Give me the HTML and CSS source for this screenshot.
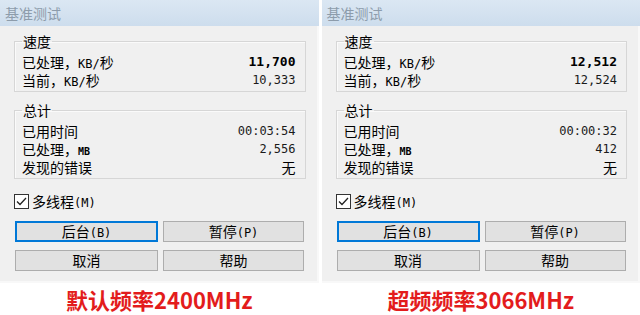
FILE: index.html
```html
<!DOCTYPE html>
<html lang="zh-CN">
<head>
<meta charset="utf-8">
<title>基准测试</title>
<link rel="stylesheet" href="styles.css">
</head>
<body>
<div class="screens">
  <div class="shot">
    <div class="window">
      <div class="titlebar">基准测试</div>
      <div class="content">
        <fieldset class="group">
          <legend>速度</legend>
          <div class="row"><span class="label">已处理，<span class="asc">KB/</span>秒</span><span class="num bold">11,700</span></div>
          <div class="row"><span class="label">当前，<span class="asc">KB/</span>秒</span><span class="num">10,333</span></div>
        </fieldset>
        <fieldset class="group">
          <legend>总计</legend>
          <div class="row"><span class="label">已用时间</span><span class="num">00:03:54</span></div>
          <div class="row"><span class="label">已处理，<span class="asc small">MB</span></span><span class="num">2,556</span></div>
          <div class="row"><span class="label">发现的错误</span><span class="label">无</span></div>
        </fieldset>
        <div class="check">
          <svg class="box" width="15" height="15" viewBox="0 0 15 15"><rect x="0.5" y="0.5" width="14" height="14" fill="#fff" stroke="#333"/><path d="M3 7.5 L6 10.5 L12 4" fill="none" stroke="#222" stroke-width="1.3"/></svg>
          <span class="label">多线程<span class="asc">(M)</span></span>
        </div>
        <div class="buttons">
          <div class="btn focus">后台<span class="asc">(B)</span></div>
          <div class="btn">暂停<span class="asc">(P)</span></div>
          <div class="btn">取消</div>
          <div class="btn">帮助</div>
        </div>
      </div>
    </div>
    <div class="caption">默认频率2400MHz</div>
  </div>
  <div class="shot">
    <div class="window">
      <div class="titlebar">基准测试</div>
      <div class="content">
        <fieldset class="group">
          <legend>速度</legend>
          <div class="row"><span class="label">已处理，<span class="asc">KB/</span>秒</span><span class="num bold">12,512</span></div>
          <div class="row"><span class="label">当前，<span class="asc">KB/</span>秒</span><span class="num">12,524</span></div>
        </fieldset>
        <fieldset class="group">
          <legend>总计</legend>
          <div class="row"><span class="label">已用时间</span><span class="num">00:00:32</span></div>
          <div class="row"><span class="label">已处理，<span class="asc small">MB</span></span><span class="num">412</span></div>
          <div class="row"><span class="label">发现的错误</span><span class="label">无</span></div>
        </fieldset>
        <div class="check">
          <svg class="box" width="15" height="15" viewBox="0 0 15 15"><rect x="0.5" y="0.5" width="14" height="14" fill="#fff" stroke="#333"/><path d="M3 7.5 L6 10.5 L12 4" fill="none" stroke="#222" stroke-width="1.3"/></svg>
          <span class="label">多线程<span class="asc">(M)</span></span>
        </div>
        <div class="buttons">
          <div class="btn focus">后台<span class="asc">(B)</span></div>
          <div class="btn">暂停<span class="asc">(P)</span></div>
          <div class="btn">取消</div>
          <div class="btn">帮助</div>
        </div>
      </div>
    </div>
    <div class="caption">超频频率3066MHz</div>
  </div>
</div>
</body>
</html>
```

FILE: styles.css
```css
html, body {
  margin: 0;
  padding: 0;
  background: #ffffff;
}
body {
  width: 640px;
  height: 315px;
  overflow: hidden;
  font-family: "Noto Sans CJK SC", sans-serif;
  font-size: 14px;
  color: #000;
}
.screens {
  display: flex;
  gap: 3px;
}
.shot {
  width: 319px;
  display: flex;
  flex-direction: column;
}
.window {
  height: 283px;
  background: #f0f0f0;
  box-shadow: inset -2px -2px 0 #f8f8f8;
}
.titlebar {
  height: 26px;
  line-height: 26px;
  padding-left: 5px;
  background: linear-gradient(#dbe7f3, #cddded);
  color: #8d9cab;
  font-size: 14px;
}
.content {
  padding: 6px 13px 0 14px;
}
.group {
  margin: 0;
  border: 1px solid #d6d6d6;
  box-shadow: inset 1px 1px 0 #fafafa;
  padding: 3px 9px 2px 7px;
}
.group + .group {
  margin-top: 9px;
}
legend {
  padding: 0 1px;
  font-size: 14px;
  line-height: 18px;
  color: #000;
}
.row {
  display: flex;
  justify-content: space-between;
  align-items: center;
  line-height: 18px;
  height: 18px;
}
.label {
  display: inline-block;
  height: 18px;
  line-height: 18px;
  color: #000;
}
.asc {
  font-family: "DejaVu Sans Mono", monospace;
  font-size: 12px;
}
.asc.small {
  font-size: 10px;
  font-weight: bold;
}
.num {
  font-family: "DejaVu Sans Mono", monospace;
  font-size: 12px;
  color: #1a1a1a;
}
.num.bold {
  font-weight: bold;
  font-size: 13px;
  color: #000;
}
.check {
  margin-top: 13px;
  height: 18px;
  display: flex;
  align-items: center;
  gap: 3px;
  line-height: 18px;
}
.box {
  display: block;
}
.buttons {
  margin-top: 11px;
  padding-left: 1px;
  display: grid;
  grid-template-columns: 143px 141px;
  grid-auto-rows: 21px;
  gap: 8px 5px;
}
.btn {
  box-sizing: border-box;
  border: 1px solid #adadad;
  background: #e1e1e1;
  text-align: center;
  line-height: 19px;
  font-size: 14px;
  color: #000;
}
.btn.focus {
  border: 2px solid #0078d7;
  line-height: 17px;
}
.caption {
  height: 32px;
  line-height: 32px;
  text-align: center;
  font-size: 22px;
  font-weight: bold;
  color: #e31c1c;
}
```
